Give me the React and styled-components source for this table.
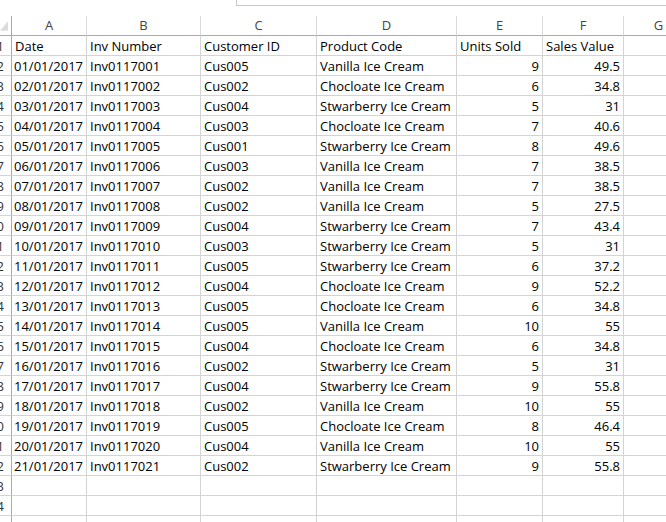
import styled, { createGlobalStyle } from 'styled-components';

const GlobalStyle = createGlobalStyle`
	html, body {
		margin: 0;
		background: #fff;
	}
	body {
		font-family: 'Open Sans', 'Liberation Sans', sans-serif;
		font-size: 13px;
		color: #000;
		overflow: hidden;
	}
`;

const COLUMNS = ['A', 'B', 'C', 'D', 'E', 'F', 'G'];
const WIDTHS = '12px 75px 114px 116px 140px 86px 81px 70px';

const ROWS = [
	['01/01/2017', 'Inv0117001', 'Cus005', 'Vanilla Ice Cream', 9, 49.5],
	['02/01/2017', 'Inv0117002', 'Cus002', 'Chocloate Ice Cream', 6, 34.8],
	['03/01/2017', 'Inv0117003', 'Cus004', 'Stwarberry Ice Cream', 5, 31],
	['04/01/2017', 'Inv0117004', 'Cus003', 'Chocloate Ice Cream', 7, 40.6],
	['05/01/2017', 'Inv0117005', 'Cus001', 'Stwarberry Ice Cream', 8, 49.6],
	['06/01/2017', 'Inv0117006', 'Cus003', 'Vanilla Ice Cream', 7, 38.5],
	['07/01/2017', 'Inv0117007', 'Cus002', 'Vanilla Ice Cream', 7, 38.5],
	['08/01/2017', 'Inv0117008', 'Cus002', 'Vanilla Ice Cream', 5, 27.5],
	['09/01/2017', 'Inv0117009', 'Cus004', 'Stwarberry Ice Cream', 7, 43.4],
	['10/01/2017', 'Inv0117010', 'Cus003', 'Stwarberry Ice Cream', 5, 31],
	['11/01/2017', 'Inv0117011', 'Cus005', 'Stwarberry Ice Cream', 6, 37.2],
	['12/01/2017', 'Inv0117012', 'Cus004', 'Chocloate Ice Cream', 9, 52.2],
	['13/01/2017', 'Inv0117013', 'Cus005', 'Chocloate Ice Cream', 6, 34.8],
	['14/01/2017', 'Inv0117014', 'Cus005', 'Vanilla Ice Cream', 10, 55],
	['15/01/2017', 'Inv0117015', 'Cus004', 'Chocloate Ice Cream', 6, 34.8],
	['16/01/2017', 'Inv0117016', 'Cus002', 'Stwarberry Ice Cream', 5, 31],
	['17/01/2017', 'Inv0117017', 'Cus004', 'Stwarberry Ice Cream', 9, 55.8],
	['18/01/2017', 'Inv0117018', 'Cus002', 'Vanilla Ice Cream', 10, 55],
	['19/01/2017', 'Inv0117019', 'Cus005', 'Chocloate Ice Cream', 8, 46.4],
	['20/01/2017', 'Inv0117020', 'Cus004', 'Vanilla Ice Cream', 10, 55],
	['21/01/2017', 'Inv0117021', 'Cus002', 'Stwarberry Ice Cream', 9, 55.8],
];

const HEADINGS = ['Date', 'Inv Number', 'Customer ID', 'Product Code', 'Units Sold', 'Sales Value'];

const Sheet = styled.div`
	width: 666px;
	height: 522px;
	overflow: hidden;
`;

const TopStrip = styled.div`
	height: 16px;
`;

const FormulaBox = styled.div`
	margin-left: 236px;
	height: 5px;
	border-left: 1px solid #c6c6c6;
	border-bottom: 1px solid #c6c6c6;
`;

const Grid = styled.div`
	display: grid;
	grid-template-columns: ${WIDTHS};
	grid-auto-rows: 20px;
`;

const Cell = styled.div`
	box-sizing: border-box;
	border-right: 1px solid #d4d4d4;
	border-bottom: 1px solid #d4d4d4;
	padding: 1px 3px 0;
	display: flex;
	align-items: center;
	justify-content: ${p => (p.$num ? 'flex-end' : 'flex-start')};
	white-space: nowrap;
	overflow: hidden;
	line-height: 1;
`;

const ColHead = styled.div`
	box-sizing: border-box;
	border-right: 1px solid #dadada;
	border-bottom: 1px solid #ababab;
	display: flex;
	align-items: center;
	justify-content: center;
	color: #444;
	font-size: 13px;
	padding-bottom: 1px;
`;

const Corner = styled(ColHead)`
	justify-content: flex-end;
	align-items: flex-end;
	padding: 0 3px 3px 0;
	border-right-color: #ababab;
	overflow: hidden;
`;

const RowHead = styled.div`
	box-sizing: border-box;
	border-right: 1px solid #ababab;
	border-bottom: 1px solid #d4d4d4;
	display: flex;
	align-items: center;
	justify-content: flex-end;
	padding: 1px 7px 0 0;
	overflow: hidden;
	color: #333;
	font-size: 13px;
`;

const SelectAll = () => (
	<svg width='10' height='12' viewBox='0 0 10 12'>
		<polygon points='10,0 10,12 0,12' fill='#dcdcdc' />
	</svg>
);

const App = () => {
	const bodyRows = [HEADINGS, ...ROWS, [], [], []];

	return (
		<Sheet>
			<GlobalStyle />
			<TopStrip>
				<FormulaBox />
			</TopStrip>
			<Grid>
				<Corner>
					<SelectAll />
				</Corner>
				{COLUMNS.map(c => (
					<ColHead key={c}>{c}</ColHead>
				))}
				{bodyRows.map((row, i) => [
					<RowHead key={`h${i}`}>{i + 1}</RowHead>,
					...COLUMNS.map((c, j) => {
						const num = i > 0 && (j === 0 || j === 4 || j === 5);
						return (
							<Cell key={`${i}-${c}`} $num={num}>
								{row[j]}
							</Cell>
						);
					}),
				])}
			</Grid>
		</Sheet>
	);
};

export default App;
